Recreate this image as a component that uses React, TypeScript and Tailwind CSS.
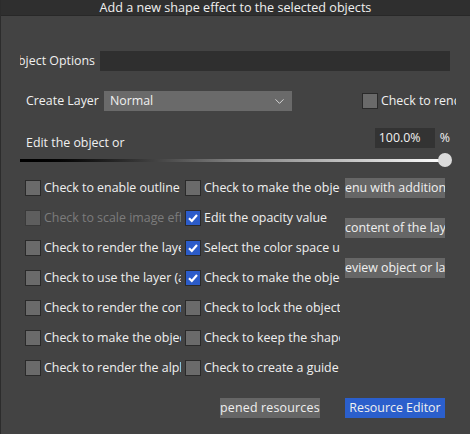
import { ChevronDown } from "lucide-react";

const col1 = [
  { label: "Check to enable outline effects", disabled: false },
  { label: "Check to scale image effects", disabled: true },
  { label: "Check to render the layer", disabled: false },
  { label: "Check to use the layer (as mask)", disabled: false },
  { label: "Check to render the content", disabled: false },
  { label: "Check to make the object", disabled: false },
  { label: "Check to render the alpha", disabled: false },
];

const col2 = [
  { label: "Check to make the object", checked: false },
  { label: "Edit the opacity value", checked: true },
  { label: "Select the color space used", checked: true },
  { label: "Check to make the object", checked: true },
  { label: "Check to lock the object", checked: false },
  { label: "Check to keep the shape", checked: false },
  { label: "Check to create a guide", checked: false },
];

const sideButtons = ["enu with additional options", "content of the layer", "eview object or layer"];

function Box({ checked, disabled }: { checked?: boolean; disabled?: boolean }) {
  return (
    <span
      className={`flex-shrink-0 w-4 h-4 border flex items-center justify-center ${
        checked
          ? "bg-[#2c5cc9] border-[#2a2a2a]"
          : disabled
          ? "bg-[#5e5e5e] border-[#3a3a3a]"
          : "bg-[#6a6a6a] border-[#2a2a2a]"
      }`}
    >
      {checked && (
        <svg width="12" height="12" viewBox="0 0 12 12">
          <path d="M2 6.2 L4.8 9 L10 3" fill="none" stroke="#fff" strokeWidth="2.2" />
        </svg>
      )}
    </span>
  );
}

export default function App() {
  return (
    <div
      className="w-[470px] h-[434px] bg-[#434343] border-l border-[#2c2c2c] overflow-hidden text-[12.4px] text-[#f0f0f0] flex flex-col"
      style={{ fontFamily: '"Open Sans", "Noto Sans", sans-serif' }}
    >
      <div className="h-[16px] bg-[#2f2f2f] border-b border-[#282828] flex items-center justify-center leading-[15px] text-[12.6px]">
        Add a new shape effect to the selected objects
      </div>

      <div className="flex items-center mt-[35px] h-5">
        <div className="w-[75px] ml-[19px] overflow-hidden whitespace-nowrap flex justify-end">Object Options</div>
        <div className="ml-[5px] w-[350px] h-5 bg-[#2f2f2f]" />
      </div>

      <div className="flex items-center mt-5 h-5">
        <span className="ml-[25px]">Create Layer</span>
        <div className="ml-[5px] w-[188px] h-5 bg-[#6a6a6a] flex items-center justify-between pl-[6px] pr-[5px]">
          <span>Normal</span>
          <ChevronDown className="w-[15px] h-[15px] text-[#dcdcdc]" strokeWidth={1.5} />
        </div>
        <div className="ml-[70px] flex items-center gap-[3px] whitespace-nowrap overflow-hidden w-[94px]">
          <Box />
          <span>Check to render</span>
        </div>
      </div>

      <div className="flex items-end mt-[17px] h-5">
        <span className="ml-[25px] mb-[-5px]">Edit the object or</span>
        <div className="ml-auto w-[60px] h-5 bg-[#333333] flex items-center pl-[4px]">100.0%</div>
        <span className="ml-[5px] mr-[20px] self-center">%</span>
      </div>

      <div className="relative mt-[11px] ml-[19px] w-[426px] h-[3px] bg-gradient-to-r from-black via-[#808080] to-white">
        <div className="absolute right-[-6px] top-[-6px] w-[14px] h-[14px] rounded-full bg-[#dadada]" />
      </div>

      <div className="flex mt-[11px] ml-[24px]">
        <div className="flex flex-col w-[160px]">
          {col1.map((c, i) => (
            <div key={i} className="h-[30px] flex items-center gap-[3px] whitespace-nowrap overflow-hidden pr-[4px]">
              <Box disabled={c.disabled} />
              <span className={`overflow-hidden ${c.disabled ? "text-[#7c7c7c]" : ""}`}>{c.label}</span>
            </div>
          ))}
        </div>
        <div className="flex flex-col w-[160px]">
          {col2.map((c, i) => (
            <div key={i} className="h-[30px] flex items-center gap-[3px] whitespace-nowrap overflow-hidden pr-[5px]">
              <Box checked={c.checked} />
              <span className="overflow-hidden">{c.label}</span>
            </div>
          ))}
        </div>
        <div className="flex flex-col gap-5 mt-[5px]">
          {sideButtons.map((b) => (
            <div key={b} className="w-[100px] h-5 bg-[#666666] leading-5 whitespace-nowrap overflow-hidden">
              {b}
            </div>
          ))}
        </div>
      </div>

      <div className="flex mt-[15px] ml-[219px] gap-[25px]">
        <div className="w-[100px] h-5 bg-[#666666] leading-5 whitespace-nowrap overflow-hidden tracking-[0.2px]">pened resources folder</div>
        <div className="w-[100px] h-5 bg-[#2b5fcc] leading-5 text-center whitespace-nowrap">Resource Editor</div>
      </div>
    </div>
  );
}
